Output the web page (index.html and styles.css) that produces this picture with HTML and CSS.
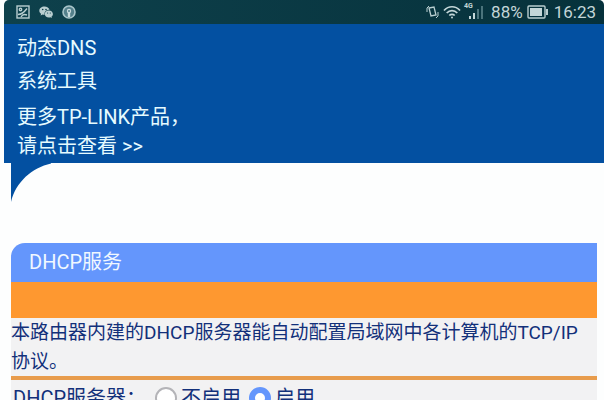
FILE: index.html
```html
<!DOCTYPE html>
<html lang="zh-CN">

<head>
    <meta charset="UTF-8">
    <meta name="viewport" content="width=device-width, initial-scale=1.0">
    <title>DHCP服务</title>
    <link rel="stylesheet" href="styles.css">
</head>

<body>
<header class="status">
    <div class="status_left">
        <svg width="14" height="14" viewBox="0 0 14 14" fill="none" stroke="#b9ced0" stroke-width="1.4">
            <rect x="1" y="1" width="12" height="12"/>
            <circle cx="4.5" cy="4.5" r="1.2"/>
            <path d="M2 9.500c4 0 6-2 9-6M5 12c1-2 3-3 6-2"/>
        </svg>
        <svg width="14" height="14" viewBox="0 0 14 14">
            <path fill="#b9ced0" d="M5.500 1.500C2.500 1.500 0.300 3.300 0.300 5.700c0 1.300.7 2.400 1.800 3.100L1.600 10.500l2-1c.6.2 1.300.3 2 .2C5 7 7 4.800 10.500 4.800 10 2.900 8 1.500 5.500 1.500z"/>
            <path fill="#b9ced0" d="M9.900 5.400C7.500 5.400 5.700 7 5.700 8.900s1.800 3.500 4.200 3.500c.5 0 1-.1 1.500-.2l1.500.9-.4-1.500c.9-.6 1.400-1.600 1.400-2.700 0-1.900-1.700-3.500-4-3.500z"/>
            <g fill="#0b3c48">
                <circle cx="3.700" cy="4.500" r=".8"/>
                <circle cx="7" cy="4.500" r=".8"/>
                <circle cx="8.600" cy="8" r=".6"/>
                <circle cx="11.300" cy="8" r=".6"/>
            </g>
        </svg>
        <svg width="14" height="14" viewBox="0 0 14 14">
            <circle cx="7" cy="7" r="6" fill="#54808b" stroke="#a9c5ca" stroke-width="1.600"/>
            <circle cx="7" cy="6" r="2.200" fill="#c8dbde"/>
            <path d="M5.800 7h2.400v5H5.800z" fill="#c8dbde"/>
            <circle cx="7" cy="6" r="1" fill="#54808b"/>
        </svg>
    </div>
    <div class="status_right">
        <svg width="13" height="16" viewBox="0 0 13 16" fill="none" stroke="#b9ced0" stroke-width="1.300">
            <path d="M3 4l5-1 2 8-5 1z"/>
            <path d="M3 2L1 4v4M12 8v4l-2 2" stroke-width="1"/>
        </svg>
        <svg width="18" height="14" viewBox="0 0 18 14" fill="none" stroke="#c3d6d8" stroke-width="1.700">
            <path d="M1 5.500c4.500-5 11.500-5 16 0M3.700 8c3-3.300 7.600-3.300 10.600 0M6.300 10.500c1.600-1.600 3.800-1.600 5.400 0"/>
            <circle cx="9" cy="12.500" r="1" fill="#c3d6d8" stroke="none"/>
        </svg>
        <div class="signal">
            <span class="net">4G</span>
            <svg width="16" height="14" viewBox="0 0 16 14">
                <path fill="#c3d6d8" d="M1 11h2v3H1zM5 8h2v6H5z"/>
                <path fill="#4b747c" d="M9 4h2v10H9zM13 1h2v13h-2z"/>
            </svg>
        </div>
        <span class="percent">88%</span>
        <svg width="21" height="14" viewBox="0 0 21 14">
            <rect x="1" y="1" width="17" height="12" rx="1" fill="none" stroke="#b9ced0" stroke-width="1.400"/>
            <rect x="3" y="3" width="12" height="8" fill="#c3d6d8"/>
            <rect x="19" y="4" width="2" height="6" fill="#b9ced0"/>
        </svg>
        <span class="clock">16:23</span>
    </div>
</header>

<nav class="menu">
    <a href="#">动态DNS</a>
    <a href="#">系统工具</a>
    <a href="#" class="more">更多TP-LINK产品，<br>请点击查看 &gt;&gt;</a>
</nav>

<main class="content">
    <svg class="corner" width="40" height="40" viewBox="0 0 40 40">
        <path fill="#0350a1" d="M0 0h42C22 4 5 18 0 39z"/>
    </svg>
    <form class="panel" action="#">
        <h1>DHCP服务</h1>
        <div class="bar"></div>
        <p>本路由器内建的DHCP服务器能自动配置局域网中各计算机的TCP/IP<br>协议。</p>
        <div class="row" role="radiogroup" aria-labelledby="dhcp">
            <span class="name" id="dhcp">DHCP服务器：</span>
            <label><input type="radio" name="dhcp" value="0">不启用</label>
            <label><input type="radio" name="dhcp" value="1" checked>启用</label>
        </div>
    </form>
</main>
</body>

</html>
```

FILE: styles.css
```css
* {
    margin: 0;
    padding: 0;
    box-sizing: border-box;
}

body {
    height: 100vh;
    overflow: hidden;
    padding-left: 4px;
    background: #fdfefe;
    font-family: Roboto, "Noto Sans CJK SC", sans-serif;
    font-size: 20px;
    line-height: 29px;
}

.status {
    display: flex;
    justify-content: space-between;
    align-items: center;
    height: 24px;
    padding: 0 8px 0 12px;
    border-radius: 5px 5px 0 0;
    background: linear-gradient(to right, #0e414c, #06313b);
    color: #c3d6d8;
}

.status_left,
.status_right {
    display: flex;
    align-items: center;
}

.status_left {
    gap: 9px;
}

.status_right {
    gap: 4px;
    font-size: 17px;
    line-height: 24px;
}

.status_right .percent {
    margin-left: 3px;
}

.status_right .clock {
    margin-left: 2px;
}

.signal {
    position: relative;
    display: flex;
    padding-left: 3px;
}

.net {
    position: absolute;
    left: -1px;
    top: -2px;
    font-size: 7px;
    font-weight: 700;
    line-height: 7px;
}

.menu {
    display: flex;
    flex-direction: column;
    align-items: flex-start;
    gap: 4px;
    padding: 10px 13px 2px;
    background: #0350a1;
}

.menu a {
    color: #e6fbff;
    text-decoration: none;
}

.menu .more {
    margin-top: 3px;
}

.content {
    padding: 0 7px;
}

.corner {
    display: block;
    margin-bottom: 40px;
}

.panel {
    border-top-left-radius: 14px;
    overflow: hidden;
    background: #f2f2f3;
    color: #12307a;
}

.panel h1 {
    padding: 5px 18px;
    background: #6496fc;
    color: #f0f8ff;
    font-size: 20px;
    font-weight: 400;
}

.bar {
    height: 36px;
    background: #fe9830;
}

.panel p {
    border-bottom: 4px solid #e89c4c;
    font-size: 19px;
}

.row {
    display: flex;
    align-items: center;
    height: 36px;
    padding-left: 2px;
}

.row .name {
    width: 142px;
}

.row label {
    display: flex;
    align-items: center;
    gap: 4px;
    margin-right: 8px;
}

.row input {
    appearance: none;
    width: 22px;
    height: 22px;
    border: 2px solid #b4b4b8;
    border-radius: 50%;
    background: #fff;
}

.row input:checked {
    border: 6px solid #6496fc;
}
```
